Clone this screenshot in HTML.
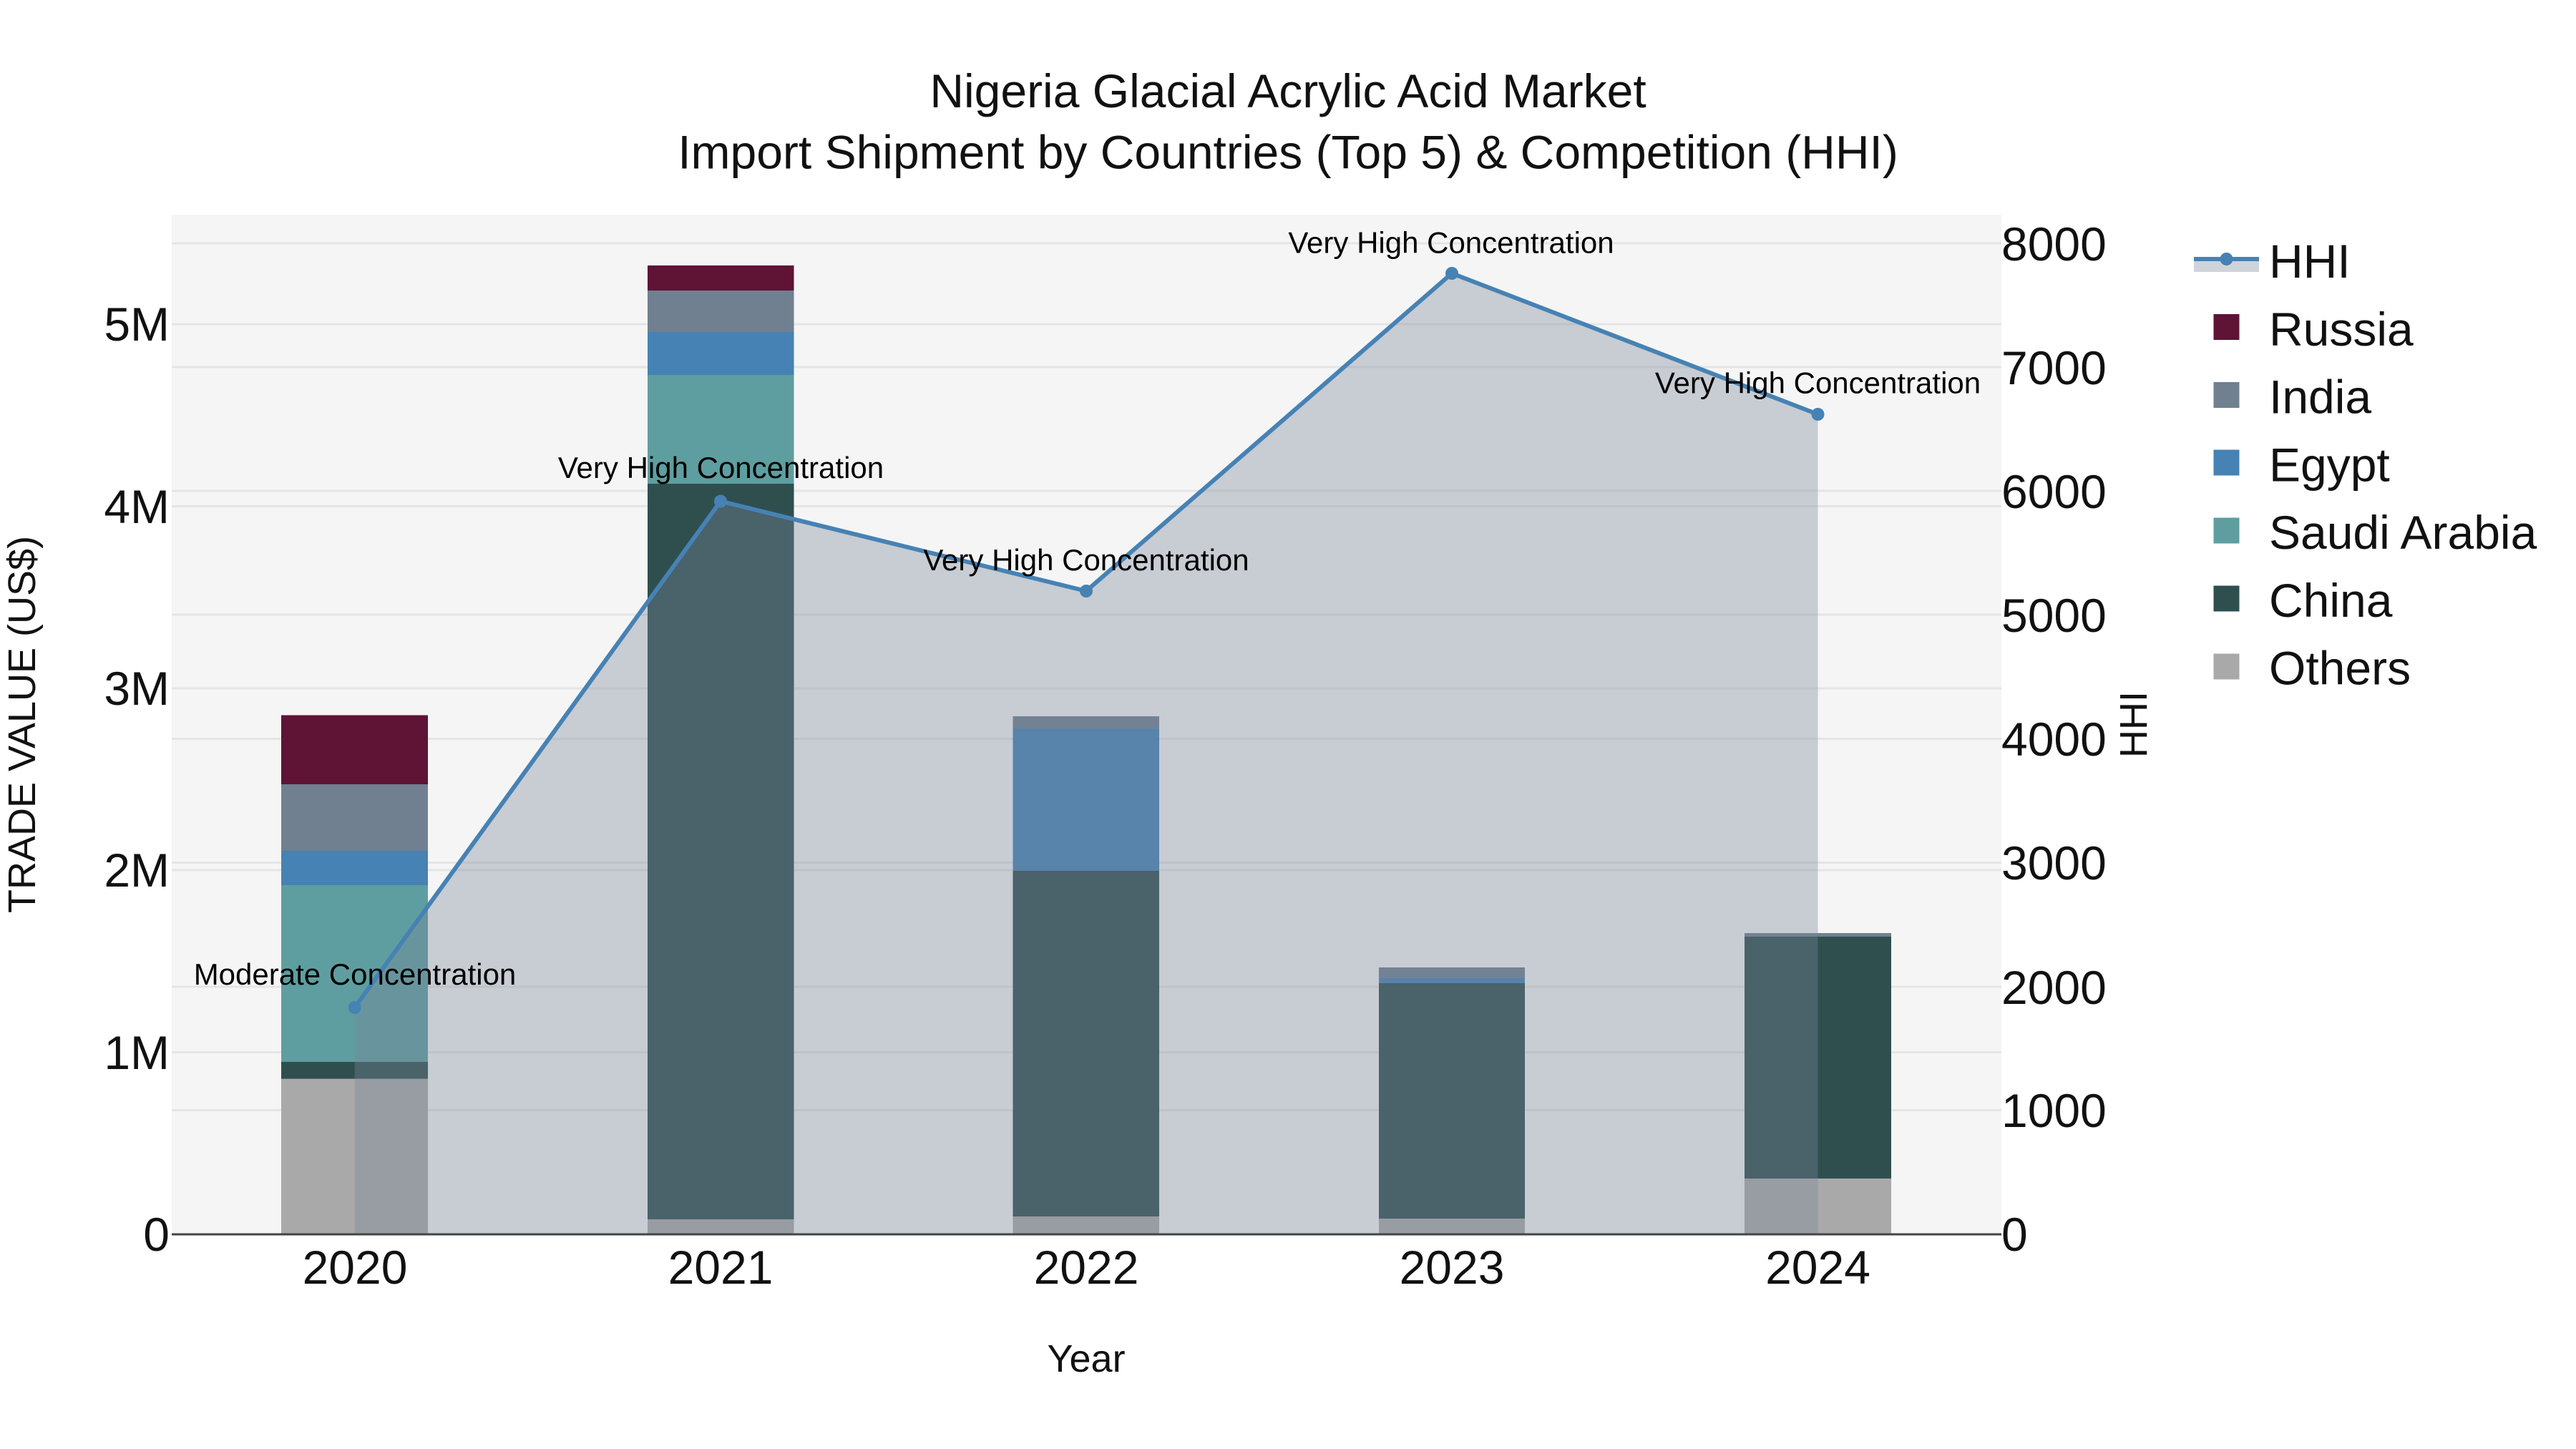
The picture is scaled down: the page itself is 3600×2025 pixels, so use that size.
<!DOCTYPE html>
<html>
<head>
<meta charset="utf-8">
<style>
html,body{margin:0;padding:0;background:#fff;width:3600px;height:2025px;overflow:hidden}
svg{display:block}
text{font-family:"Liberation Sans",Arial,sans-serif;fill:#111}
</style>
</head>
<body>
<svg xmlns="http://www.w3.org/2000/svg" width="3600" height="2025" viewBox="0 0 3600 2025">
<rect width="3600" height="2025" fill="#fff"/>
<rect x="240" y="300" width="2557" height="1425" fill="#f5f5f5"/>
<g stroke="#e5e5e5" stroke-width="3">
<path d="M240 340H2797M240 513H2797M240 686H2797M240 859H2797M240 1032.5H2797M240 1205.5H2797M240 1379H2797M240 1551.5H2797"/>
<path d="M240 453H2797M240 707.5H2797M240 962H2797M240 1216H2797M240 1470.5H2797"/>
</g>
<!-- bars -->
<g>
<rect x="393" y="1507.7" width="205" height="217.3" fill="#a9a9a9"/>
<rect x="393" y="1484" width="205" height="23.7" fill="#2f4f4f"/>
<rect x="393" y="1237" width="205" height="247" fill="#5f9ea0"/>
<rect x="393" y="1189" width="205" height="48" fill="#4682b4"/>
<rect x="393" y="1096" width="205" height="93" fill="#708090"/>
<rect x="393" y="999.5" width="205" height="96.5" fill="#5f1335"/>

<rect x="905" y="1704" width="204.5" height="21" fill="#a9a9a9"/>
<rect x="905" y="676" width="204.5" height="1028" fill="#2f4f4f"/>
<rect x="905" y="524" width="204.5" height="152" fill="#5f9ea0"/>
<rect x="905" y="464" width="204.5" height="60" fill="#4682b4"/>
<rect x="905" y="406" width="204.5" height="58" fill="#708090"/>
<rect x="905" y="371" width="204.5" height="35" fill="#5f1335"/>

<rect x="1415.5" y="1700" width="204.5" height="25" fill="#a9a9a9"/>
<rect x="1415.5" y="1217" width="204.5" height="483" fill="#2f4f4f"/>
<rect x="1415.5" y="1018" width="204.5" height="199" fill="#4682b4"/>
<rect x="1415.5" y="1001" width="204.5" height="17" fill="#708090"/>

<rect x="1927" y="1703" width="204" height="22" fill="#a9a9a9"/>
<rect x="1927" y="1374" width="204" height="329" fill="#2f4f4f"/>
<rect x="1927" y="1367" width="204" height="7" fill="#4682b4"/>
<rect x="1927" y="1352" width="204" height="15" fill="#708090"/>

<rect x="2438" y="1647" width="205" height="78" fill="#a9a9a9"/>
<rect x="2438" y="1309" width="205" height="338" fill="#2f4f4f"/>
<rect x="2438" y="1304" width="205" height="5" fill="#708090"/>
</g>
<!-- HHI fill -->
<path d="M495.7 1408L1007 700.5L1518 826L2029 382L2540.5 579V1725H495.7Z" fill="rgb(122,134,152)" fill-opacity=".36"/>
<!-- zero line -->
<path d="M240 1725H2797" stroke="#444" stroke-width="3"/>
<!-- HHI line -->
<path d="M495.7 1408L1007 700.5L1518 826L2029 382L2540.5 579" fill="none" stroke="#4682b4" stroke-width="6" stroke-linejoin="round"/>
<g fill="#4682b4">
<circle cx="495.7" cy="1408" r="9"/>
<circle cx="1007" cy="700.5" r="9"/>
<circle cx="1518" cy="826" r="9"/>
<circle cx="2029" cy="382" r="9"/>
<circle cx="2540.5" cy="579" r="9"/>
</g>
<!-- annotations -->
<g font-size="42" text-anchor="middle" style="fill:#000">
<text x="496" y="1376" style="fill:#000">Moderate Concentration</text>
<text x="1007.5" y="668" style="fill:#000">Very High Concentration</text>
<text x="1518" y="797" style="fill:#000">Very High Concentration</text>
<text x="2028" y="353.5" style="fill:#000">Very High Concentration</text>
<text x="2540.5" y="549.5" style="fill:#000">Very High Concentration</text>
</g>
<!-- title -->
<g font-size="66" text-anchor="middle">
<text x="1800" y="150">Nigeria Glacial Acrylic Acid Market</text>
<text x="1800" y="235.5">Import Shipment by Countries (Top 5) &amp; Competition (HHI)</text>
</g>
<!-- left ticks -->
<g font-size="66" text-anchor="end">
<text x="237" y="476">5M</text>
<text x="237" y="731">4M</text>
<text x="237" y="985">3M</text>
<text x="237" y="1239">2M</text>
<text x="237" y="1494">1M</text>
<text x="237" y="1748">0</text>
</g>
<!-- right ticks -->
<g font-size="66" text-anchor="start">
<text x="2797" y="364">8000</text>
<text x="2797" y="537">7000</text>
<text x="2797" y="710">6000</text>
<text x="2797" y="883">5000</text>
<text x="2797" y="1056">4000</text>
<text x="2797" y="1229">3000</text>
<text x="2797" y="1403">2000</text>
<text x="2797" y="1575">1000</text>
<text x="2797" y="1748">0</text>
</g>
<!-- x ticks -->
<g font-size="66" text-anchor="middle">
<text x="496" y="1794">2020</text>
<text x="1007" y="1794">2021</text>
<text x="1518" y="1794">2022</text>
<text x="2029" y="1794">2023</text>
<text x="2540.5" y="1794">2024</text>
</g>
<!-- axis titles -->
<text x="1518" y="1917" font-size="54" text-anchor="middle">Year</text>
<text transform="translate(49 1012.5) rotate(-90)" font-size="54" text-anchor="middle">TRADE VALUE (US$)</text>
<text transform="translate(3000 1012.5) rotate(-90)" font-size="54" text-anchor="middle">HHI</text>
<!-- legend -->
<rect x="3066" y="362" width="91" height="18" fill="rgb(122,134,152)" fill-opacity=".36"/>
<path d="M3066 362H3157" stroke="#4682b4" stroke-width="6"/>
<circle cx="3111.5" cy="362" r="9" fill="#4682b4"/>
<rect x="3093.5" y="439" width="36" height="36" fill="#5f1335"/>
<rect x="3093.5" y="534" width="36" height="36" fill="#708090"/>
<rect x="3093.5" y="628.5" width="36" height="36" fill="#4682b4"/>
<rect x="3093.5" y="723.5" width="36" height="36" fill="#5f9ea0"/>
<rect x="3093.5" y="818.5" width="36" height="36" fill="#2f4f4f"/>
<rect x="3093.5" y="913.5" width="36" height="36" fill="#a9a9a9"/>
<g font-size="66">
<text x="3171" y="388">HHI</text>
<text x="3171" y="483">Russia</text>
<text x="3171" y="577.5">India</text>
<text x="3171" y="672.5">Egypt</text>
<text x="3171" y="767">Saudi Arabia</text>
<text x="3171" y="862">China</text>
<text x="3171" y="956.5">Others</text>
</g>
</svg>
</body>
</html>
